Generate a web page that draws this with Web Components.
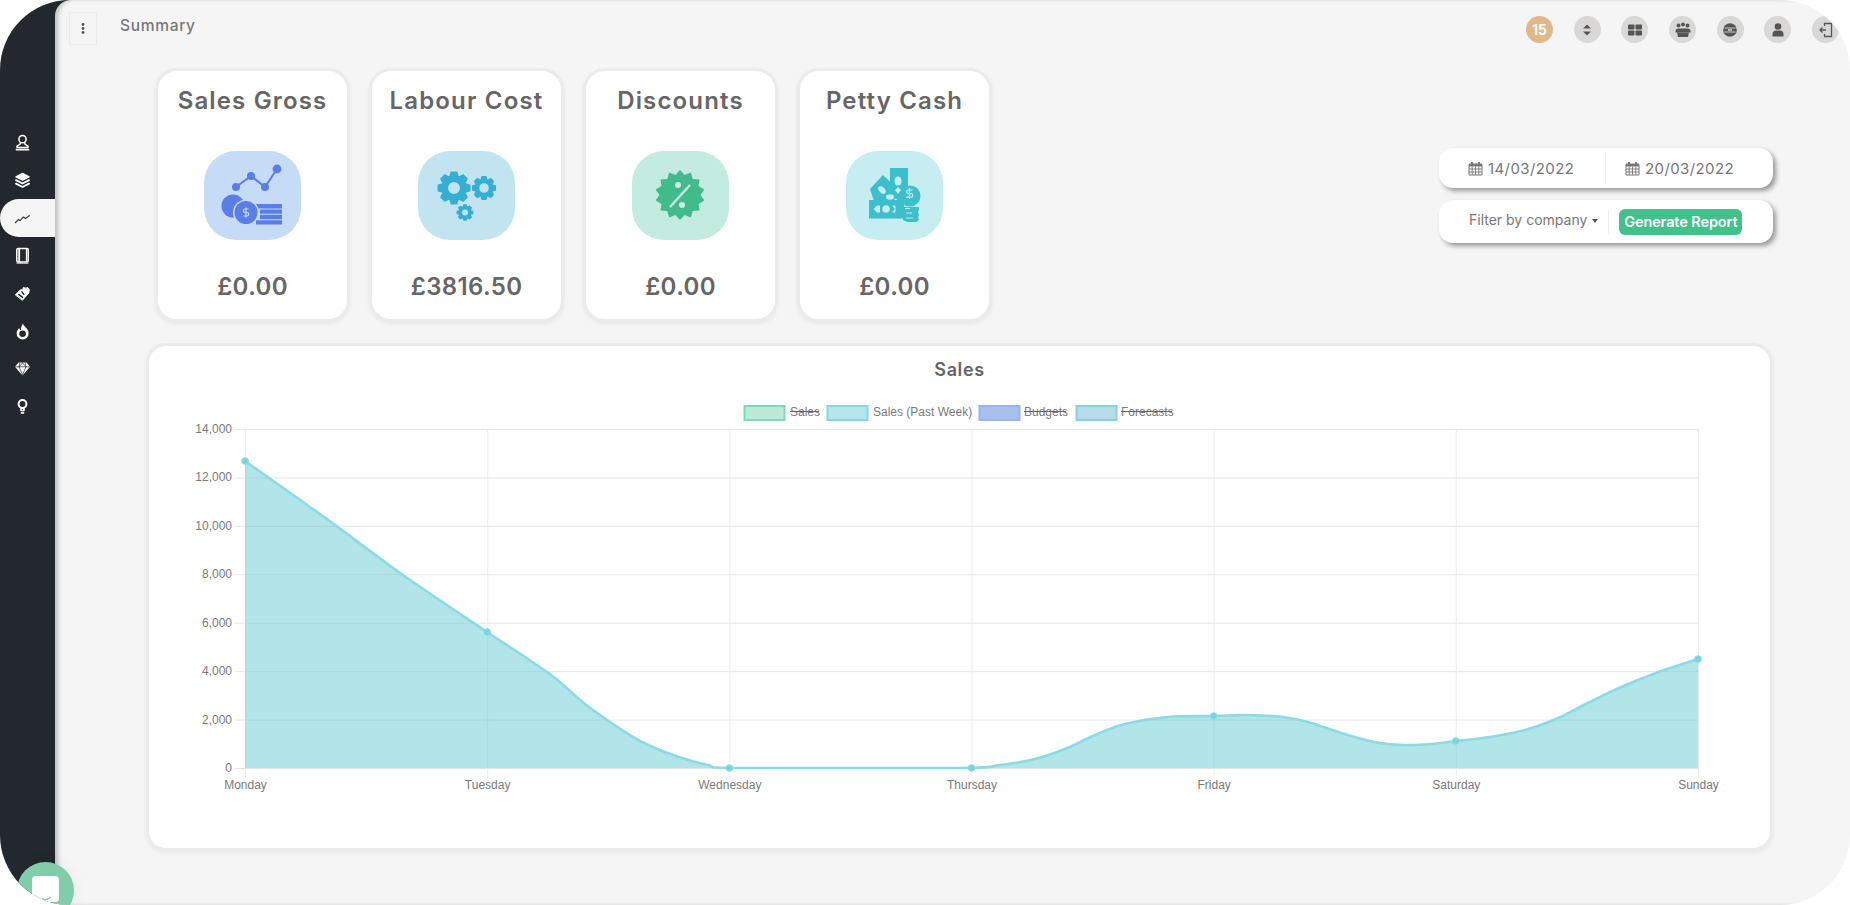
<!DOCTYPE html>
<html lang="en"><head><meta charset="utf-8"><title>Summary</title>
<style>
html,body{margin:0;height:100%;background:#fff;overflow:hidden}
body{font-family:Inter,"Open Sans","Liberation Sans",sans-serif}
</style></head><body>
<app-shell>
  <side-nav slot="side">
    <nav-item icon="user"></nav-item><nav-item icon="layers"></nav-item><nav-item icon="trend" active></nav-item><nav-item icon="book"></nav-item><nav-item icon="tag"></nav-item><nav-item icon="flame"></nav-item><nav-item icon="diamond"></nav-item><nav-item icon="bulb"></nav-item>
  </side-nav>
  <top-bar slot="main" heading="Summary">
    <round-btn badge="15"></round-btn><round-btn icon="sort"></round-btn><round-btn icon="grid"></round-btn><round-btn icon="users"></round-btn><round-btn icon="globe"></round-btn><round-btn icon="person"></round-btn><round-btn icon="exit"></round-btn>
  </top-bar>
  <stats-row slot="main">
    <stat-card slot="cards" heading="Sales Gross" amount="£0.00" bg="#c6dbf5" icon="sales"></stat-card>
    <stat-card slot="cards" heading="Labour Cost" amount="£3816.50" bg="#c2e4f0" icon="gears"></stat-card>
    <stat-card slot="cards" heading="Discounts" amount="£0.00" bg="#c4ebdf" icon="discount"></stat-card>
    <stat-card slot="cards" heading="Petty Cash" amount="£0.00" bg="#c5edf2" icon="cash"></stat-card>
    <report-filter slot="filter" from="14/03/2022" to="20/03/2022"></report-filter>
  </stats-row>
  <sales-chart slot="main" heading="Sales"></sales-chart>
  <chat-bubble slot="overlay"></chat-bubble>
</app-shell>
<script>
const svg=(w,h,vb,body)=>`<svg xmlns="http://www.w3.org/2000/svg" width="${w}" height="${h}" viewBox="${vb}" aria-hidden="true">${body}</svg>`;

class AppShell extends HTMLElement{constructor(){super();this.attachShadow({mode:'open'}).innerHTML=`<style>
:host{display:grid;grid-template-columns:55px 1fr;height:100vh;border-radius:70px;overflow:hidden;background:linear-gradient(90deg,#22282d 70px,transparent 70px);position:relative}
.main{background:#f5f5f5;border-top-left-radius:16px;box-shadow:inset 4px 0 4px -1px rgba(0,0,0,.22);min-width:0}
</style><slot name="side"></slot><div class="main"><slot name="main"></slot></div><slot name="overlay"></slot>`}}
customElements.define('app-shell',AppShell);

class SideNav extends HTMLElement{constructor(){super();this.attachShadow({mode:'open'}).innerHTML=`<style>
:host{display:flex;flex-direction:column;padding-top:124px}
</style><slot></slot>`}}
customElements.define('side-nav',SideNav);

const NAV={
user:`<circle cx="8.5" cy="5.2" r="3.6"/><path d="M6.3 8.6V10L3 12.2v1.2h11v-1.2L10.7 10V8.6"/><path d="M2.5 15.6h12" stroke-width="1.8"/>`,
layers:`<path d="M8.5 1.5l6.5 3.3-6.5 3.3L2 4.8z" fill="#fff"/><path d="M2 8.2l6.5 3.3L15 8.2M2 11.7l6.5 3.3 6.5-3.3" stroke-width="1.9"/>`,
trend:`<path d="M1.5 12.5l3-3 1.5 1 3.5-3.5 2 1.5 4-3" stroke="#3a4045" stroke-width="1.3" stroke-dasharray="3 .8"/>`,
book:`<rect x="2.800" y="1.600" width="11.400" height="13.400" rx="1.200" stroke-width="1.500"/><path d="M5.200 2v12.600" stroke-width="1.800"/><path d="M12.500 2v12.600" stroke-width="1.300"/><path d="M3 16.200h11" stroke-width=".9"/>`,
tag:`<path d="M1.600 9.600L6.400 5l2.400-.4L9.400 2.400l2.700 1 1-1.200 2.200 2.200-.5 3.600-6.200 7z" fill="#fff" stroke-width="1"/><path d="M4.800 9.400l3.800 3M7.800 6.800l2 2.600" stroke="#22282d" stroke-width="1.400"/>`,
flame:`<path d="M9 .8c.4 2.600 5.600 4.600 5.600 9.600a6 6 0 0 1-12 0c0-2.700 1.500-4.200 2.700-5.500.2 1.100.7 2 1.600 2.500.1-2.600.5-5 2.100-6.600z" fill="#fff" stroke="none"/><circle cx="8.600" cy="10.800" r="3.300" fill="#22282d" stroke="none"/>`,
diamond:`<path d="M4.500 2.500h8L16 6.800 8.500 15.500 1 6.800z" fill="#fff" stroke="none"/><path d="M1.500 6.800h14M5.800 2.800L5 6.800l3.500 8M11.200 2.800l.8 4-3.500 8M8.500 2.800L5 6.800M8.500 2.800l3.500 4" stroke="#22282d" stroke-width=".7"/>`,
bulb:`<circle cx="8.500" cy="6" r="3.900" stroke-width="2"/><path d="M7 10v2.500h3V10" stroke-width="1.600"/><path d="M7.500 14.800h2" stroke-width="1.800"/>`};
class NavItem extends HTMLElement{connectedCallback(){if(this.shadowRoot)return;this.attachShadow({mode:'open'}).innerHTML=`<style>
:host{display:flex;align-items:center;height:37.7px;padding-left:14px;box-sizing:border-box;flex:none}
:host([active]){background:#f5f5f5;border-radius:19px 0 0 19px}
svg{display:block;fill:none;stroke:#fff;stroke-width:1.5;stroke-linejoin:round;stroke-linecap:round}
</style>${svg(17,17,'0 0 17 17',NAV[this.getAttribute('icon')])}`}}
customElements.define('nav-item',NavItem);

class TopBar extends HTMLElement{connectedCallback(){if(this.shadowRoot)return;this.attachShadow({mode:'open'}).innerHTML=`<style>
:host{display:flex;align-items:center;height:68px;box-sizing:border-box;padding:0 11px 9px 13.5px}
.menu{width:28px;height:33px;box-sizing:border-box;border:1px solid #ebebeb;display:flex;align-items:center;justify-content:center;margin-bottom:2px}
h1{margin:0 0 8px 23.5px;font:500 15.5px Inter,sans-serif;letter-spacing:.7px;color:#777;flex:1}
.r{display:flex;gap:20.67px}
</style><div class="menu">${svg(4,11,'0 0 4 11','<circle cx="2" cy="1.500" r="1.400" fill="#555"/><circle cx="2" cy="5.500" r="1.400" fill="#555"/><circle cx="2" cy="9.500" r="1.400" fill="#555"/>')}</div><h1>${this.getAttribute('heading')}</h1><div class="r"><slot></slot></div>`}}
customElements.define('top-bar',TopBar);

const BTN={
sort:`<path d="M4 6.500l4-4 4 4zM4 9.500l4 4 4-4z"/>`,
grid:`<rect x="1" y="2.500" width="6.500" height="5" rx=".8"/><rect x="8.500" y="2.500" width="6.500" height="5" rx=".8"/><rect x="1" y="8.500" width="6.500" height="5" rx=".8"/><rect x="8.500" y="8.500" width="6.500" height="5" rx=".8"/>`,
users:`<circle cx="3.500" cy="3.500" r="2"/><circle cx="8" cy="2.500" r="2"/><circle cx="12.500" cy="3.500" r="2"/><path d="M.5 9.500c0-2 1-3 3-3h9c2 0 3 1 3 3v1h-15z"/><path d="M2 10.500h12l-1 4.500H3z"/>`,
globe:`<circle cx="8" cy="8" r="6.800"/><path d="M2.500 6h11M2.500 10h11" stroke="#d8d8d8" stroke-width=".9" fill="none"/><path d="M6 8h4" stroke="#d8d8d8" stroke-width="1.500" fill="none"/>`,
person:`<circle cx="8" cy="4.500" r="3.300"/><path d="M2.500 14.500v-2.500c0-2 1.500-3.500 3.500-3.500h4c2 0 3.500 1.500 3.500 3.500v2.500z"/>`,
exit:`<path d="M6.500 4V1.500h7v13h-7V12" fill="none" stroke="#555" stroke-width="1.300"/><path d="M8 8H2M4.500 5.500L2 8l2.500 2.500" fill="none" stroke="#555" stroke-width="1.300"/>`};
class RoundBtn extends HTMLElement{connectedCallback(){if(this.shadowRoot)return;const b=this.getAttribute('badge');this.attachShadow({mode:'open'}).innerHTML=`<style>
:host{display:flex;align-items:center;justify-content:center;width:27px;height:27px;border-radius:50%;background:${b?'#e0b98b':'#d9d8d6'};color:#fff;font:600 14px Inter,sans-serif}
svg{display:block;fill:#555}
</style>${b||svg(16,16,'0 0 16 16',BTN[this.getAttribute('icon')])}`}}
customElements.define('round-btn',RoundBtn);

class StatsRow extends HTMLElement{constructor(){super();this.attachShadow({mode:'open'}).innerHTML=`<style>
:host{display:flex;justify-content:space-between;align-items:flex-start;padding:0 77px 0 100px}
.c{display:flex;gap:19px}
.f{padding-top:80px}
</style><div class="c"><slot name="cards"></slot></div><div class="f"><slot name="filter"></slot></div>`}}
customElements.define('stats-row',StatsRow);

function gear(cx,cy,r,hole,n){const rr=r*.76;let d='';for(let i=0;i<n;i++){const a=i/n*2*Math.PI,s=Math.PI/n;
const p=[[a-s*.95,rr],[a-s*.5,r],[a+s*.5,r],[a+s*.95,rr]];p.forEach((q,j)=>{d+=(i==0&&j==0?'M':'L')+(cx+q[1]*Math.cos(q[0])).toFixed(2)+' '+(cy+q[1]*Math.sin(q[0])).toFixed(2)})}
d+='Z M'+(cx+hole)+' '+cy+'a'+hole+' '+hole+' 0 1 0 '+(-2*hole)+' 0a'+hole+' '+hole+' 0 1 0 '+(2*hole)+' 0Z';return `<path fill-rule="evenodd" d="${d}"/>`}
function spiky(cx,cy,R,r,n){let d='';for(let i=0;i<n*2;i++){const a=i/(n*2)*2*Math.PI-Math.PI/2,q=i%2?r:R;d+=(i?'L':'M')+(cx+q*Math.cos(a)).toFixed(2)+' '+(cy+q*Math.sin(a)).toFixed(2)}return `<path d="${d}Z"/>`}
const CARD={
sales:{vb:'4 1 97 89',fill:'#5b7de8',body:`<path d="M36 37L51 26 65 37 77 19" fill="none" stroke="#5b7de8" stroke-width="2"/><circle cx="36" cy="37" r="4"/><circle cx="51" cy="26" r="4"/><circle cx="65" cy="37" r="4"/><circle cx="77" cy="19" r="4.400"/>
<circle cx="33" cy="56" r="11.500"/><path d="M56 54h26v4.400H56zM60 59.400h22v4.400H60zM60 64.800h22v4.400H60zM56 70.200h26v4.300H56z"/><circle cx="46" cy="62.500" r="13" fill="#c6dbf5"/><circle cx="46" cy="62.500" r="11.500"/><path d="M48.600 59h-3.400a1.700 1.700 0 0 0 0 3.500h1.800a1.700 1.700 0 0 1 0 3.500h-3.600M46 57.500v10" fill="none" stroke="#c6dbf5" stroke-width="1.200"/>`},
gears:{vb:'0 0 97 89',fill:'#35aed4',body:gear(36,37,16.8,6,8)+gear(66,37,12.3,4.800,8)+gear(47,61.5,8.5,3,8)},
discount:{vb:'0 0 97 89',fill:'#41bb8c',body:spiky(48,44,25,20.5,14)+`<path d="M38 56L58 34" stroke="#cdeee2" stroke-width="2.400"/><circle cx="46" cy="34" r="3" fill="#cdeee2"/><circle cx="50" cy="54" r="3" fill="#cdeee2"/>`},
cash:{vb:'5 1 97 89',fill:'#3cbecb',body:`<path d="M49 18h18v28l-8 6-10-8z"/><path d="M29 39l13-14 18 17-8 9H33z"/><rect x="28" y="50" width="35" height="18.500"/><circle cx="69" cy="46" r="10.500"/><path d="M62 57h16v3l-1 2 1 3-1 2 1 3-3 2h-9l-4-2v-4z"/>
<ellipse cx="57" cy="31" rx="3.500" ry="4.500" fill="#c5edf2"/><path d="M57 37l3 3-3 4-3-4z" fill="#c5edf2"/><ellipse cx="41" cy="40" rx="2.800" ry="4.500" fill="#c5edf2" transform="rotate(-45 41 40)"/><ellipse cx="49" cy="47" rx="4" ry="2.800" fill="#c5edf2"/>
<circle cx="45" cy="59" r="3.800" fill="#c5edf2"/><path d="M36 55.500l-3.500 3.500 3.500 3.500h3v-7zM51 55.500h3.500v7H51l3-3.500z" fill="#c5edf2"/><path d="M72 40h-4.500a1.800 1.800 0 0 0 0 3.600h2.500a1.800 1.800 0 0 1 0 3.600H65M68.500 38v11" stroke="#c5edf2" stroke-width="1.200" fill="none"/><path d="M64 58.500h5M65 63h6M65 68h7" stroke="#c5edf2" stroke-width="1"/>`}};
class StatCard extends HTMLElement{connectedCallback(){if(this.shadowRoot)return;const a=k=>this.getAttribute(k),ic=CARD[a('icon')];this.attachShadow({mode:'open'}).innerHTML=`<style>
:host{display:flex;flex-direction:column;align-items:center;width:195px;height:254px;box-sizing:border-box;background:#fff;border:3px solid #ebebeb;border-radius:22px;box-shadow:0 2px 4px rgba(0,0,0,.06);color:#666;padding-top:14px}
h2{margin:0;font:600 24px/32px Inter,sans-serif;letter-spacing:1.15px;white-space:nowrap}
.b{width:97px;height:89px;border-radius:32px;background:${a('bg')};margin-top:34px;display:flex}
svg{display:block;fill:${ic.fill}}
.v{margin-top:31px;font:600 24px/32px Inter,sans-serif;letter-spacing:.35px}
</style><h2>${a('heading')}</h2><div class="b">${svg(97,89,ic.vb,ic.body)}</div><div class="v">${a('amount')}</div>`}}
customElements.define('stat-card',StatCard);

const CAL=svg(15,15,'0 0 15 15','<path d="M1 3.500h13V14H1z" fill="#fff" stroke="#777" stroke-width="1"/><path d="M1 2.500h13v3H1z" fill="#777"/><path d="M4 1v3M11 1v3" stroke="#777" stroke-width="2"/><path d="M1 8h13M1 11h13M4.200 5.500V14M7.500 5.500V14M10.800 5.500V14" stroke="#777" stroke-width=".9"/>');
class ReportFilter extends HTMLElement{connectedCallback(){if(this.shadowRoot)return;const a=k=>this.getAttribute(k);this.attachShadow({mode:'open'}).innerHTML=`<style>
:host{display:flex;flex-direction:column;gap:12px;width:334px;color:#777;font-family:Inter,sans-serif}
.box{display:flex;align-items:center;background:#fff;border-radius:14px;box-shadow:3px 3px 5px rgba(0,0,0,.38)}
.d{height:40px}.f{height:43px}
.cell{display:flex;align-items:center;gap:5px;font-size:15px;letter-spacing:.4px;white-space:nowrap}
.cell:first-child{width:167px;box-sizing:border-box;padding-left:29px;border-right:1px solid #eee;height:32px}
.cell:last-child{padding-left:19px}
svg{display:block;flex:none}
.fl{font-size:14px;letter-spacing:0;margin-left:30px;margin-bottom:4px;display:flex;align-items:center;gap:5px;white-space:nowrap}
.caret{width:0;height:0;border:3.500px solid transparent;border-top:4px solid #555;border-bottom:0;margin-top:2px}
.sep{width:1px;height:24px;background:#eee;margin:0 10px 0 10px}
button{all:unset;background:#43c08b;color:#fff;border-radius:6px;height:26px;width:123px;text-align:center;font:600 14.500px/26px Inter,sans-serif;letter-spacing:-.1px;white-space:nowrap}
</style><div class="box d"><div class="cell">${CAL}${a('from')}</div><div class="cell">${CAL}${a('to')}</div></div>
<div class="box f"><div class="fl">Filter by company<span class="caret"></span></div><span class="sep"></span><button>Generate Report</button></div>`}}
customElements.define('report-filter',ReportFilter);

class SalesChart extends HTMLElement{connectedCallback(){if(this.shadowRoot)return;
const L=245,R=1698,T=429,B=768,days=['Monday','Tuesday','Wednesday','Thursday','Friday','Saturday','Sunday'],vals=[12680,5616,0,0,2147,1115,4500];
const X=i=>L+(R-L)*i/6,Y=v=>B-(B-T)*v/14000;
const P=vals.map((v,i)=>({x:X(i),y:Y(v)}));
/* curve traced through the reference */
const Q=[[245,461],[331,522],[400,573],[487,632],[525,657],[555,678],[585,704],[610,722],[640,741],[673,755],[708,765],[740,768],[960,768],[1000,765],[1035,759],[1065,749],[1095,735],[1125,724],[1168,717],[1214,716],[1246,715],[1283,717],[1308,722],[1341,733],[1374,742],[1403,745],[1432,744],[1456,741],[1490,737],[1525,730],[1556,719],[1586,704],[1619,688],[1656,673],[1698,659]];
let d=`M${Q[0][0]} ${Q[0][1]}`;for(let i=0;i<Q.length-1;i++){const a=Q[i-1]||Q[i],b=Q[i],c=Q[i+1],e=Q[i+2]||c,k=1/6;
const c1x=b[0]+(c[0]-a[0])*k,c1y=Math.min(B,b[1]+(c[1]-a[1])*k),c2x=c[0]-(e[0]-b[0])*k,c2y=Math.min(B,c[1]-(e[1]-b[1])*k);
d+=`C${c1x.toFixed(1)} ${c1y.toFixed(1)} ${c2x.toFixed(1)} ${c2y.toFixed(1)} ${c[0]} ${c[1]}`}
let g='';for(let i=0;i<=7;i++){const y=Y(i*2000)+.5;g+=`<path d="M${L-10} ${y}H${R}" stroke="#e6e6e6"/><text x="${L-13}" y="${y+3.5}" text-anchor="end">${(i*2000).toLocaleString('en-GB')}</text>`}
days.forEach((n,i)=>{const x=X(i)+.5;g+=`<path d="M${x} ${T}V${B+10}" stroke="#ececec"/><text x="${x}" y="${B+21}" text-anchor="middle">${n}</text>`});
const leg=[[744.5,'Sales',790,1,'#bde9d8','#7fd8b8',29],[827.5,'Sales (Past Week)',873,0,'#b4e7ec','#86d8e0',0],[979.5,'Budgets',1024,1,'#a9bfec','#9ab3ea',42],[1076.5,'Forecasts',1121,1,'#b5dce8','#86d4e0',51]].map(l=>`<rect x="${l[0]}" y="406" width="40" height="14" fill="${l[4]}" stroke="${l[5]}" stroke-width="2"/><text x="${l[2]}" y="415.500">${l[1]}</text>${l[3]?`<path d="M${l[2]} 411.500h${l[6]}" stroke="#666"/>`:''}`).join('');
const pts=P.map(p=>`<circle cx="${p.x}" cy="${p.y}" r="3.300" fill="#79d4dd" stroke="#8adbe2"/>`).join('');
this.attachShadow({mode:'open'}).innerHTML=`<style>
:host{display:block;margin:21px 77px 0 91px;height:508px;box-sizing:border-box;background:#fff;border:3px solid #ebebeb;border-radius:20px;box-shadow:0 2px 4px rgba(0,0,0,.06)}
h3{margin:0;text-align:center;height:47px;font:600 18px/48px Inter,sans-serif;letter-spacing:.6px;color:#666}
svg{display:block}
text{font:12px "Liberation Sans",Arial,sans-serif;fill:#7a7a7a}
</style><h3>${this.getAttribute('heading')}</h3><svg xmlns="http://www.w3.org/2000/svg" width="1621" height="455" viewBox="149 393 1621 455">${leg}${g}
<path d="${d}V${B}H${L}Z" fill="rgba(100,204,214,.5)"/><path d="${d}" fill="none" stroke="#8adbe2" stroke-width="2.600"/>${pts}</svg>`}}
customElements.define('sales-chart',SalesChart);

class ChatBubble extends HTMLElement{constructor(){super();this.attachShadow({mode:'open'}).innerHTML=`<style>
:host{position:absolute;left:17px;top:862px;width:57px;height:57px;border-radius:50%;background:#7fcda9;box-shadow:0 0 16px rgba(0,0,0,.06);display:block}
.s{position:absolute;left:15px;top:14px;width:27px;height:26px;background:#fff;border-radius:4px}
svg{position:absolute;left:23px;top:31px}
</style><div class="s"></div>${svg(14,8,'0 0 14 8','<path d="M2 6c3 1 6 .500 9-2" fill="none" stroke="#7fcda9" stroke-width="1.500"/>')}`}}
customElements.define('chat-bubble',ChatBubble);
</script>
</body></html>
